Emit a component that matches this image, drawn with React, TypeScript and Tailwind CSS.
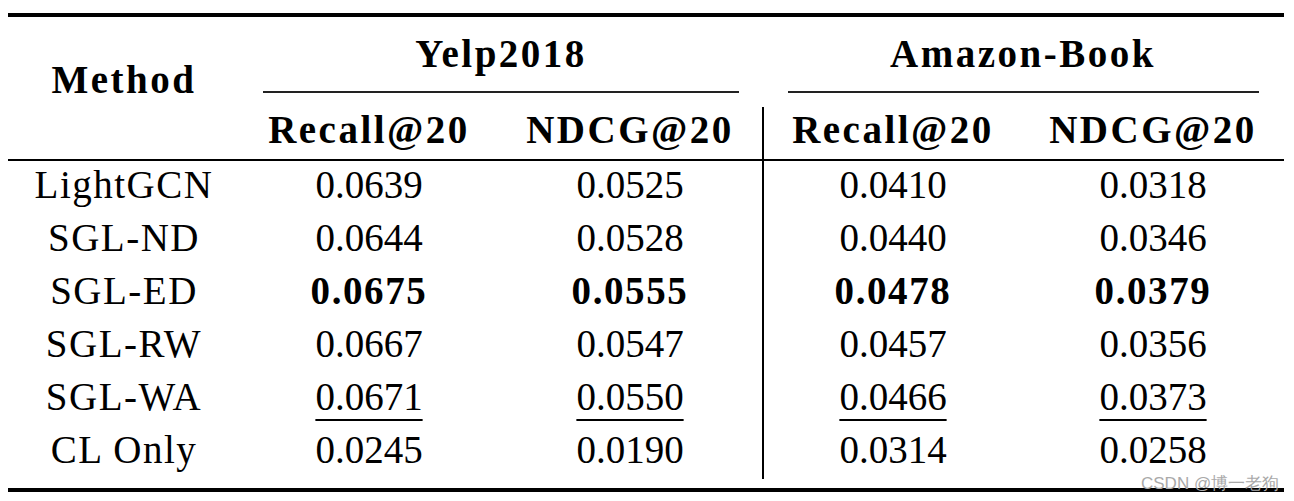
const cols = "grid grid-cols-[232px_258px_264px_260px_262px]";
const cell = "text-center font-['Liberation_Serif']";

type Cell = { v: string; b?: boolean; u?: boolean };

const rows: { name: string; cells: Cell[] }[] = [
  { name: "LightGCN", cells: [{ v: "0.0639" }, { v: "0.0525" }, { v: "0.0410" }, { v: "0.0318" }] },
  { name: "SGL-ND", cells: [{ v: "0.0644" }, { v: "0.0528" }, { v: "0.0440" }, { v: "0.0346" }] },
  {
    name: "SGL-ED",
    cells: [
      { v: "0.0675", b: true },
      { v: "0.0555", b: true },
      { v: "0.0478", b: true },
      { v: "0.0379", b: true },
    ],
  },
  { name: "SGL-RW", cells: [{ v: "0.0667" }, { v: "0.0547" }, { v: "0.0457" }, { v: "0.0356" }] },
  {
    name: "SGL-WA",
    cells: [
      { v: "0.0671", u: true },
      { v: "0.0550", u: true },
      { v: "0.0466", u: true },
      { v: "0.0373", u: true },
    ],
  },
  { name: "CL Only", cells: [{ v: "0.0245" }, { v: "0.0190" }, { v: "0.0314" }, { v: "0.0258" }] },
];

function Value({ c }: { c: Cell }) {
  if (c.b) return <span className="font-bold tracking-[1.6px]">{c.v}</span>;
  if (c.u) return <span className="underline decoration-2 underline-offset-[9px]">{c.v}</span>;
  return <span>{c.v}</span>;
}

export default function App() {
  return (
    <div className="relative w-[1294px] h-[501px] bg-white">
      <div className="font-serif pt-[13px] pl-[8px] text-black text-[39px]">
        <div className="w-[1276px]">
          {/* top rule */}
          <div className="h-[4px] bg-black" />

          {/* header */}
          <div className={`${cols} font-bold tracking-[2.5px]`}>
            <div className={`${cell} row-span-2 pt-[41px] leading-[44px]`}>Method</div>
            <div className="col-span-2">
              <div className={`${cell} h-[74px] leading-[74px]`}>Yelp2018</div>
              <div className="h-[2px] mx-[23px] bg-[#222]" />
            </div>
            <div className="col-span-2">
              <div className={`${cell} h-[74px] leading-[74px]`}>Amazon-Book</div>
              <div className="h-[2px] ml-[26px] mr-[25px] bg-[#222]" />
            </div>
            <div className={`${cell} pt-[15px] pb-[7px] leading-[44px]`}>Recall@20</div>
            <div className={`${cell} pt-[15px] pb-[7px] leading-[44px]`}>NDCG@20</div>
            <div className="pt-[14px]">
              <div className={`${cell} border-l-2 border-black pt-[1px] pb-[7px] leading-[44px]`}>
                Recall@20
              </div>
            </div>
            <div className={`${cell} pt-[15px] pb-[7px] leading-[44px]`}>NDCG@20</div>
          </div>

          {/* header rule */}
          <div className="h-[2px] bg-black" />

          {/* body */}
          {rows.map((r) => (
            <div key={r.name} className={`${cols} h-[53px] leading-[47px]`}>
              <div className={`${cell} tracking-[1.5px]`}>{r.name}</div>
              <div className={cell}>
                <Value c={r.cells[0]} />
              </div>
              <div className={cell}>
                <Value c={r.cells[1]} />
              </div>
              <div className={`${cell} border-l-2 border-black`}>
                <Value c={r.cells[2]} />
              </div>
              <div className={cell}>
                <Value c={r.cells[3]} />
              </div>
            </div>
          ))}

          {/* bottom rule */}
          <div className="mt-[9px] h-[4px] bg-black" />
        </div>
      </div>

      {/* watermark */}
      <div className="absolute left-[1141px] top-[474px] font-sans text-[17px] leading-[17px] text-[#a9a9a9] whitespace-nowrap">
        <span className="font-['Liberation_Sans']">CSDN @博一老狗</span>
      </div>
    </div>
  );
}
